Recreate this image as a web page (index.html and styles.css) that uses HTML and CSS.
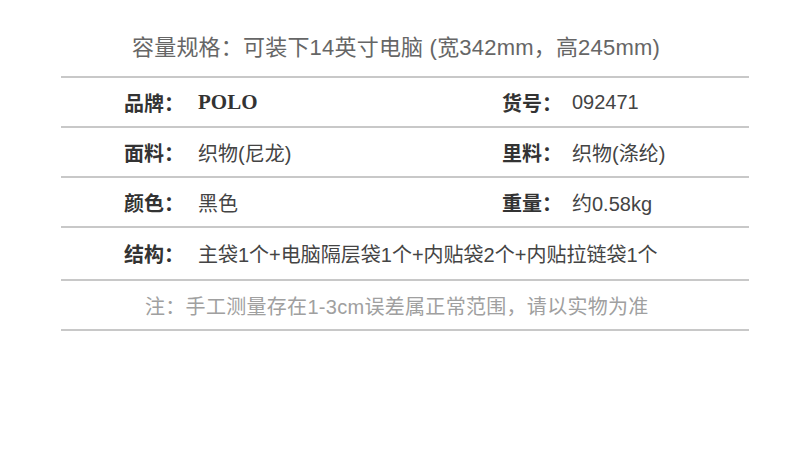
FILE: index.html
```html
<!DOCTYPE html>
<html lang="zh">
<head>
<meta charset="utf-8">
<link rel="stylesheet" href="styles.css">
</head>
<body>
<div class="sheet">
  <div class="title">容量规格：可装下14英寸电脑 (宽342mm，高245mm)</div>
  <div class="row">
    <div class="cell left"><span class="label">品牌：</span><span class="value brand">POLO</span></div>
    <div class="cell right"><span class="label">货号：</span><span class="value">092471</span></div>
  </div>
  <div class="row">
    <div class="cell left"><span class="label">面料：</span><span class="value">织物(尼龙)</span></div>
    <div class="cell right"><span class="label">里料：</span><span class="value">织物(涤纶)</span></div>
  </div>
  <div class="row">
    <div class="cell left"><span class="label">颜色：</span><span class="value">黑色</span></div>
    <div class="cell right"><span class="label">重量：</span><span class="value">约0.58kg</span></div>
  </div>
  <div class="row tall">
    <div class="cell left wide"><span class="label">结构：</span><span class="value">主袋1个+电脑隔层袋1个+内贴袋2个+内贴拉链袋1个</span></div>
  </div>
  <div class="note">注：手工测量存在1-3cm误差属正常范围，请以实物为准</div>
</div>
</body>
</html>
```
FILE: styles.css
```css
* { box-sizing: border-box; }
body {
  margin: 0;
  background: #fff;
  font-family: "Liberation Sans", "Noto Sans CJK SC", sans-serif;
}
.sheet {
  width: 688px;
  margin-left: 61px;
}
.title {
  height: 78px;
  padding-top: 14px;
  display: flex;
  align-items: center;
  justify-content: center;
  font-size: 22px;
  letter-spacing: 0.2px;
  color: #666;
  border-bottom: 2px solid #c8c8c8;
  padding-right: 18px;
  white-space: nowrap;
}
.row {
  height: 50px;
  display: flex;
  align-items: center;
  border-bottom: 2px solid #c8c8c8;
  font-size: 20px;
  color: #333;
  white-space: nowrap;
}
.row.tall { height: 53px; }
.cell {
  display: flex;
  align-items: center;
}
.cell.left {
  width: 441px;
  padding-left: 63px;
}
.cell.left.wide { width: auto; flex: 1; }
.label {
  font-weight: bold;
  width: 74px;
}
.cell.right .label { width: 70px; }
.value { color: #444; }
.brand {
  font-family: "Liberation Serif", serif;
  font-weight: bold;
  font-size: 21px;
  color: #333;
}
.note {
  height: 50px;
  display: flex;
  align-items: center;
  padding-left: 84px;
  font-size: 20px;
  letter-spacing: 0.3px;
  color: #a0a0a0;
  border-bottom: 2px solid #c8c8c8;
  white-space: nowrap;
}
```
